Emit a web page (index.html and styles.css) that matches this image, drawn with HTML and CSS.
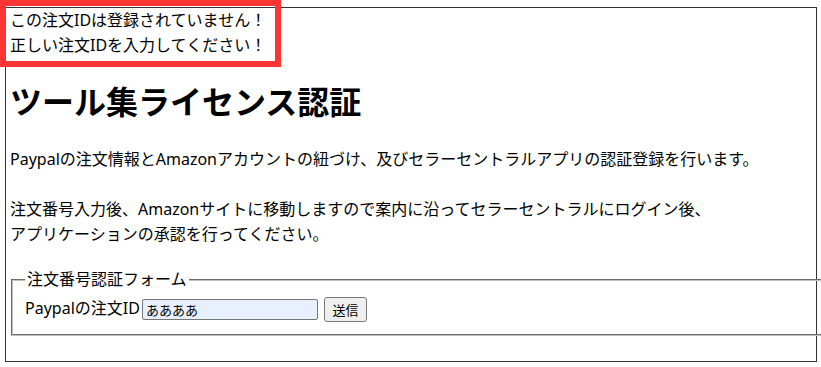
FILE: index.html
```html
<!DOCTYPE html>
<html lang="ja">
<head>
  <meta charset="utf-8">
  <meta name="viewport" content="width=device-width, initial-scale=1">
  <title>ツール集ライセンス認証</title>
  <link rel="stylesheet" href="styles.css">
</head>
<body>
  <div class="mark"></div>
  <div class="container">
    <div class="error">
      この注文IDは登録されていません！<br>
      正しい注文IDを入力してください！
    </div>
    <h1>ツール集ライセンス認証</h1>
    <p class="intro">
      Paypalの注文情報とAmazonアカウントの紐づけ、及びセラーセントラルアプリの認証登録を行います。<br><br>
      注文番号入力後、Amazonサイトに移動しますので案内に沿ってセラーセントラルにログイン後、<br>
      アプリケーションの承認を行ってください。
    </p>
    <form class="auth-form">
      <fieldset>
        <legend>注文番号認証フォーム</legend>
        <label for="order-id">Paypalの注文ID</label><input type="text" id="order-id" name="order-id" value="ああああ"> <button type="submit">送信</button>
      </fieldset>
    </form>
  </div>
</body>
</html>
```

FILE: styles.css
```css
body {
  margin: 0;
  font-family: "Noto Sans", "Noto Sans CJK JP", sans-serif;
  font-size: 16px;
  line-height: 25px;
  color: #000;
}

.container {
  margin: 7px 4px 0 5px;
  padding: 0 4px 0 4px;
  height: 353px;
  border: 1px solid #333;
}

.error {
  line-height: 25px;
}

h1 {
  font-family: "Noto Sans CJK JP", sans-serif;
  font-size: 32px;
  line-height: 42px;
  margin: 21px 0 0 0;
}

.intro {
  margin: 26px 0 0 0;
}

.auth-form {
  margin: 20px 0 0 0;
}

fieldset {
  width: 830px;
  margin: 0 0 0 1px;
  padding: 4px 12px 12px 12px;
  border: 2px groove #c0c0c0;
}

legend {
  padding: 0 2px;
  line-height: 25px;
}

label {
  margin-right: 2px;
  line-height: 25px;
}

input[type=text] {
  width: 176px;
  height: 21px;
  box-sizing: border-box;
  padding: 1px 3px;
  border: 1px solid #767676;
  border-radius: 2px;
  background-color: #e8f0fe;
  font-family: "Noto Sans CJK JP", sans-serif;
  font-size: 13px;
  vertical-align: middle;
}

button[type=submit] {
  width: 43px;
  height: 25px;
  margin-left: 2px;
  padding: 0;
  border: 1px solid #767676;
  border-radius: 3px;
  background-color: #efefef;
  font-family: "Noto Sans CJK JP", sans-serif;
  font-size: 13px;
  vertical-align: middle;
}

.mark {
  position: absolute;
  left: 0;
  top: 0;
  width: 269px;
  height: 55px;
  border: 6px solid #ff3434;
  z-index: 2;
}
```
